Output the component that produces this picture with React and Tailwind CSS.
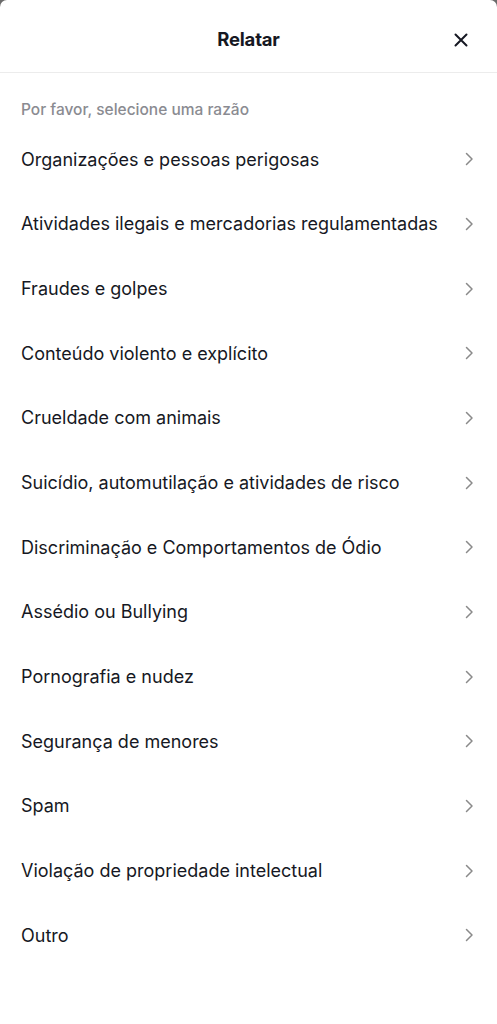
import React from "react";

const items = [
  "Organizações e pessoas perigosas",
  "Atividades ilegais e mercadorias regulamentadas",
  "Fraudes e golpes",
  "Conteúdo violento e explícito",
  "Crueldade com animais",
  "Suicídio, automutilação e atividades de risco",
  "Discriminação e Comportamentos de Ódio",
  "Assédio ou Bullying",
  "Pornografia e nudez",
  "Segurança de menores",
  "Spam",
  "Violação de propriedade intelectual",
  "Outro",
];

function Chevron() {
  return (
    <svg width="10" height="14" viewBox="0 0 10 14" fill="none" className="shrink-0">
      <path d="M2.5 1.5L8 7L2.5 12.5" stroke="#8a8a8a" strokeWidth="1.5" strokeLinecap="round" strokeLinejoin="round" />
    </svg>
  );
}

export default function App() {
  return (
    <div className="bg-[#6b6b6b] w-[497px] h-[1024px]" style={{ fontFamily: "Inter, 'Noto Sans', sans-serif" }}>
      <div className="bg-white w-full h-full rounded-t-[7px]">
        <div className="relative h-[73px] flex items-center justify-center pt-[7px] border-b border-[#ececec]">
          <span className="text-[18.5px] font-bold text-[#161823] tracking-[-0.2px]">Relatar</span>
          <svg className="absolute right-[29px] top-[33px]" width="14" height="14" viewBox="0 0 14 14" fill="none">
            <path d="M1.5 1.5L12.5 12.5M12.5 1.5L1.5 12.5" stroke="#161823" strokeWidth="2" strokeLinecap="round" />
          </svg>
        </div>
        <div className="h-[54px] pl-[21px] pt-[27px]">
          <div className="text-[15.5px] leading-[20px] text-[#8a8b91] font-medium">Por favor, selecione uma razão</div>
        </div>
        <div className="flex flex-col">
          {items.map((t) => (
            <div key={t} className="h-[64.67px] flex items-center justify-between pl-[21px] pr-[23px]">
              <span className="text-[18px] text-[#161823]">{t}</span>
              <Chevron />
            </div>
          ))}
        </div>
      </div>
    </div>
  );
}
